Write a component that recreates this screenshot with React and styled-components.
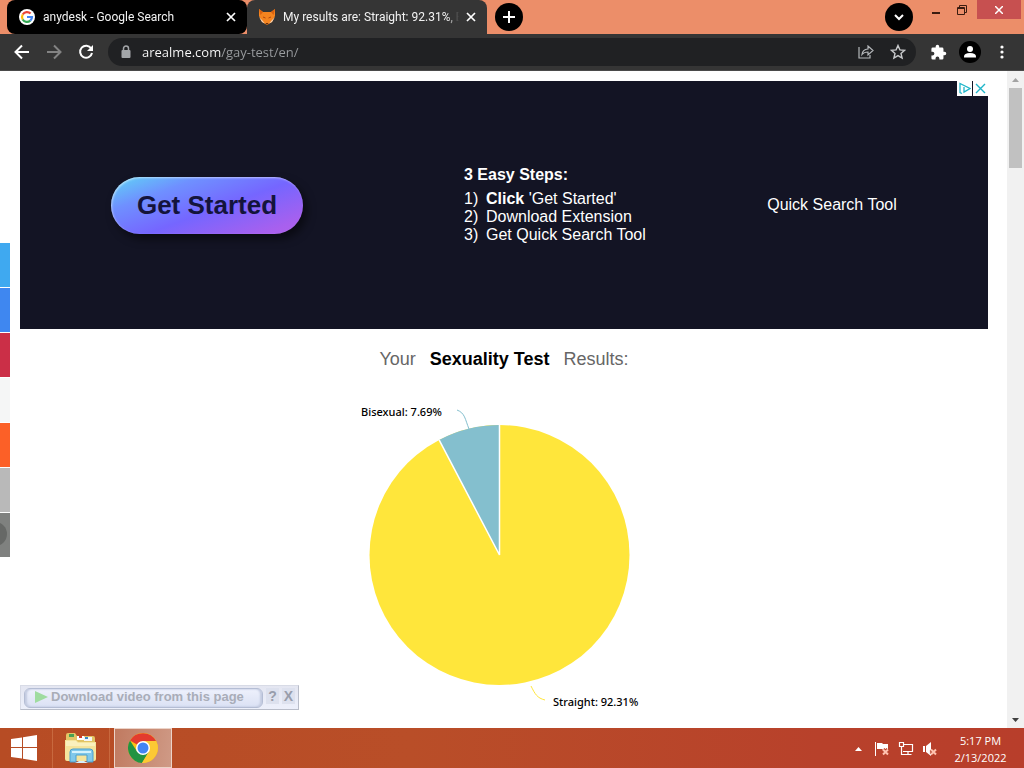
import React from "react";
import styled, { createGlobalStyle, css } from "styled-components";

const ui = `"Open Sans", "Noto Sans", sans-serif`;
const compact = `Roboto, "Open Sans", sans-serif`;
const sans = `"Liberation Sans", Arial, sans-serif`;

const GlobalStyle = createGlobalStyle`
  * { box-sizing: border-box; }
  body { margin: 0; background: #fff; font-family: ${sans}; }
  button { border: 0; padding: 0; margin: 0; background: none; font: inherit; color: inherit; cursor: pointer; }
  svg { display: block; flex: none; }
`;

const Desktop = styled.div`
  display: flex;
  flex-direction: column;
  height: 100vh;
  overflow: hidden;
`;

/* Window frame */
const TabStrip = styled.header`
  display: flex;
  align-items: flex-start;
  flex: none;
  height: 34px;
  padding-left: 7px;
  background: #ec8e69;
`;

const Tab = styled.div`
  display: flex;
  align-items: center;
  width: 240px;
  height: 34px;
  padding: 0 8px 0 12px;
  border-radius: ${(p) => (p.$active ? "8px 8px 0 0" : "8px")};
  background: ${(p) => (p.$active ? "#353535" : "#000")};
  color: #f2f2f2;
  font: 12px/16px ${compact};
`;

const TabTitle = styled.button`
  display: flex;
  align-items: center;
  gap: 8px;
  flex: 1;
  min-width: 0;
  text-align: left;
`;

const TabText = styled.span`
  flex: 1;
  overflow: hidden;
  white-space: nowrap;
  mask-image: linear-gradient(to left, transparent, #000 12px);
`;

const TabClose = styled.button`
  display: grid;
  place-items: center;
  width: 16px;
  height: 16px;
  margin-left: 4px;
`;

const RoundButton = styled.button`
  display: grid;
  place-items: center;
  width: 28px;
  height: 28px;
  margin: 3px 10px 0 8px;
  border-radius: 50%;
  background: #000;
`;

const WindowControls = styled.div`
  display: flex;
  margin-left: auto;
`;

const WindowButton = styled.button`
  display: grid;
  place-items: center;
  width: 26px;
  height: 19px;
`;

const CloseWindow = styled(WindowButton)`
  width: 44px;
  margin: 0 3px 0 2px;
  background: #c75050;
`;

const Toolbar = styled.nav`
  display: flex;
  align-items: center;
  flex: none;
  height: 37px;
  padding: 0 6px;
  background: #353535;
  border-bottom: 1px solid #4a4a4a;
`;

const ToolButton = styled.button`
  display: grid;
  place-items: center;
  width: 32px;
  height: 28px;
`;

const AddressBar = styled.div`
  display: flex;
  align-items: center;
  flex: 1;
  height: 28px;
  margin: 0 6px;
  padding: 0 2px 0 12px;
  border-radius: 14px;
  background: #202123;
`;

const AddressInput = styled.input`
  flex: 1;
  min-width: 0;
  height: 24px;
  margin-left: 10px;
  padding: 0;
  border: 0;
  outline: 0;
  font: 13px/24px ${ui};
  background: linear-gradient(to right, #fff 79px, #9a9da0 79px);
  background-clip: text;
  -webkit-background-clip: text;
  color: transparent;
`;

/* Page */
const Viewport = styled.div`
  position: relative;
  display: flex;
  flex: 1;
  min-height: 0;
  background: #fff;
`;

const Page = styled.main`
  flex: 1;
  min-width: 0;
  padding: 10px 19px 0 20px;
  overflow: hidden;
`;

const Ad = styled.section`
  position: relative;
  display: grid;
  grid-template-columns: 374fr 282fr 312fr;
  align-items: center;
  height: 248px;
  background: #131424;
  color: #fff;
  font-size: 16px;
  line-height: 18px;
`;

const AdChoices = styled.div`
  position: absolute;
  top: 0;
  right: 0;
  display: flex;
  gap: 1px;
`;

const AdBadge = styled.button`
  display: grid;
  place-items: center;
  width: 15px;
  height: 15px;
  background: #fff;
`;

const GetStarted = styled.button`
  justify-self: center;
  width: 192px;
  height: 57px;
  border-radius: 29px;
  background: linear-gradient(160deg, #5fd6f5 0%, #6f90ff 26%, #7566ff 55%, #a860ee 88%, #b062ea 100%);
  box-shadow: inset 1px 1px 2px rgba(255, 255, 255, 0.5), 4px 5px 8px rgba(0, 0, 0, 0.5);
  color: #14143c;
  font-size: 26px;
  font-weight: bold;
  line-height: 57px;
`;

const Steps = styled.div`
  padding-left: 70px;
`;

const StepsTitle = styled.strong`
  display: block;
  margin-bottom: 6px;
`;

const StepList = styled.ol`
  margin: 0;
  padding: 0;
  list-style: none;
`;

const Step = styled.li`
  display: flex;
  white-space: pre;
`;

const StepNumber = styled.span`
  width: 22px;
`;

const AdName = styled.div`
  text-align: center;
`;

const ResultHeading = styled.h1`
  display: flex;
  justify-content: center;
  gap: 14px;
  margin: 20px 0 0;
  font-size: 18px;
  font-weight: normal;
  line-height: 20px;
  color: #666;
`;

const TestName = styled.strong`
  color: #000;
`;

const Chart = styled.svg`
  margin: 26px auto 0;
  font: 500 11px "Noto Sans", sans-serif;
`;

const Share = styled.aside`
  position: absolute;
  left: 0;
  top: 172px;
  display: grid;
  gap: 1px;
`;

const ShareLink = styled.a`
  display: block;
  width: 10px;
  height: 44px;
  overflow: hidden;
  background: ${(p) => p.$color};
`;

const Downloader = styled.div`
  position: absolute;
  left: 20px;
  bottom: 18px;
  display: flex;
  align-items: center;
  gap: 3px;
  width: 279px;
  height: 25px;
  padding: 0 3px;
  background: linear-gradient(#e4e6f1, #edf0fb);
  border: 1px solid #d8dbe6;
  border-right-color: #b9bdc9;
  border-bottom-color: #b9bdc9;
  color: #a9adb8;
  font-size: 13px;
  font-weight: bold;
`;

const DownloadButton = styled.button`
  display: flex;
  align-items: center;
  gap: 2px;
  flex: 1;
  height: 20px;
  padding: 0 0 2px 9px;
  border: 1px solid #b4bdd4;
  border-radius: 6px;
  background: linear-gradient(#eef1fc, #dbe1f4);
  box-shadow: inset 2px 0 2px #c3cbe0, inset -2px 0 2px #c3cbe0;
  white-space: nowrap;
`;

const SmallButton = styled.button`
  width: 13px;
  height: 16px;
  margin-bottom: 4px;
  background: #dde1ee;
  color: #989dab;
  font-size: 14px;
  line-height: 16px;
`;

const Scrollbar = styled.div`
  display: flex;
  flex-direction: column;
  align-items: center;
  width: 17px;
  background: #f1f1f1;
`;

const ScrollArrow = styled.button`
  display: grid;
  place-items: center;
  width: 17px;
  height: 17px;
`;

const ScrollThumb = styled.div`
  width: 13px;
  height: 80px;
  margin-bottom: auto;
  background: #c1c1c1;
`;

/* Taskbar */
const Taskbar = styled.footer`
  display: flex;
  align-items: center;
  gap: 4px;
  flex: none;
  height: 40px;
  background: linear-gradient(to right, #b74c24, #b94e28 40%, #b8412b 80%, #b83e2b);
  color: #fff;
`;

const TaskButton = styled.button`
  display: grid;
  place-items: center;
  width: ${(p) => (p.$start ? "48px" : "58px")};
  height: 40px;
  ${(p) =>
    p.$divided &&
    css`
      border-left: 1px solid #c8693f;
      border-right: 1px solid #c8693f;
    `}
  ${(p) =>
    p.$current &&
    css`
      background: linear-gradient(100deg, #c07a60, #cf9a86);
      border: 1px solid #ecd3c8;
    `}
`;

const Tray = styled.div`
  display: flex;
  align-items: center;
  margin-left: auto;
  padding: 2px 5px 0 0;
`;

const TrayButton = styled.button`
  display: grid;
  place-items: center;
  width: 24px;
  height: 24px;
`;

const Clock = styled.time`
  width: 77px;
  text-align: center;
  font: 11px/17px ${ui};
`;

const CloseIcon = () => (
  <svg width="10" height="10" viewBox="0 0 10 10" stroke="#fff" strokeWidth="1.7">
    <path d="M1 1l8 8M9 1L1 9" />
  </svg>
);

const GoogleIcon = () => (
  <svg width="16" height="16" viewBox="0 0 16 16">
    <circle cx="8" cy="8" r="8" fill="#fff" />
    <g fill="none" strokeWidth="2.2">
      <path d="M11.6 4.6A5 5 0 0 0 3.7 5.5" stroke="#ea4335" />
      <path d="M3.7 5.5a5 5 0 0 0 0 5" stroke="#fbbc05" />
      <path d="M3.7 10.5a5 5 0 0 0 7.6 1.2" stroke="#34a853" />
      <path d="M11.3 11.7A5 5 0 0 0 13 8H8" stroke="#4285f4" />
    </g>
  </svg>
);

const FoxIcon = () => (
  <svg width="16" height="16" viewBox="0 0 16 16">
    <path d="M0 0l4 3h8l4-3v7l-3 6-5 3-5-3-3-6z" fill="#f5841f" />
    <path d="M0 0l4 3-2.500 3zM16 0l-4 3 2.500 3z" fill="#d9610f" />
    <path d="M0 8l3 3 3 3.500-3-1.500zM16 8l-3 3-3 3.500 3-1.500z" fill="#f6d5b8" />
    <path d="M4 8l2.500 1M12 8L9.500 9" stroke="#b3480c" />
    <path d="M6.500 14h3L8 15.800z" fill="#5a2a10" />
  </svg>
);

const ChromeIcon = () => (
  <svg width="30" height="30" viewBox="0 0 30 30">
    <circle cx="15" cy="15" r="15" fill="#fbc116" />
    <path d="M15 15L2 7.500A15 15 0 0 1 28 8H15z" fill="#e33b2e" />
    <path d="M2 7.500A15 15 0 0 0 14 30l7-11.500-12 0z" fill="#229342" />
    <path d="M28 8H15v7l6 3.500L14 30A15 15 0 0 0 28 8z" fill="#fcc934" />
    <circle cx="15" cy="15" r="7" fill="#fff" />
    <circle cx="15" cy="15" r="5.500" fill="#4285f4" />
  </svg>
);

const FolderIcon = () => (
  <svg width="34" height="32" viewBox="0 0 34 32">
    <path d="M2 3q0-2 2-2h7l2 3h16q2 0 2 2v22H2z" fill="#e2c465" />
    <path d="M5 2h5v3H5z" fill="#49a052" />
    <path d="M13 4h7l2 4h-9z" fill="#fff" />
    <path d="M15 4h3v2h-3z" fill="#cf3b2b" />
    <path d="M20 5h8v4h-8z" fill="#f5f5f5" />
    <path d="M21 5h3v2h-3z" fill="#3489c9" />
    <path d="M1 8h11l2 2h18v17q0 2-2 2H3q-2 0-2-2z" fill="#f5e49c" />
    <path d="M2 9h10l2 2h17v3H2z" fill="#faf0bd" />
    <path d="M6 30V20q0-3 3-3h17q3 0 3 3v10h-6v-7H12v7z" fill="#80c8ea" stroke="#4b9fce" />
    <path d="M8 20h19" stroke="#d5f2fc" strokeWidth="2" />
    <path d="M11 31l4-2h5l4 2z" fill="#d6eefb" />
  </svg>
);

const shares = [
  ["Twitter", "#3fa9f0"],
  ["Facebook", "#3f87f0"],
  ["Pinterest", "#cb2f47"],
  ["Email", "#f5f6f6"],
  ["Reddit", "#fc6027"],
  ["Link", "#b9b9b9"],
  ["More", "#7f817f"],
];

export default function App() {
  return (
    <>
      <GlobalStyle />
      <Desktop>
        <TabStrip>
          <Tab>
            <TabTitle>
              <GoogleIcon />
              <TabText>anydesk - Google Search</TabText>
            </TabTitle>
            <TabClose aria-label="Close tab"><CloseIcon /></TabClose>
          </Tab>
          <Tab $active>
            <TabTitle>
              <FoxIcon />
              <TabText>My results are: Straight: 92.31%, B</TabText>
            </TabTitle>
            <TabClose aria-label="Close tab"><CloseIcon /></TabClose>
          </Tab>
          <RoundButton aria-label="New tab">
            <svg width="12" height="12" viewBox="0 0 12 12" stroke="#fff" strokeWidth="2">
              <path d="M6 0v12M0 6h12" />
            </svg>
          </RoundButton>
          <WindowControls>
            <RoundButton aria-label="Search tabs">
              <svg width="10" height="7" viewBox="0 0 10 7" fill="none" stroke="#fff" strokeWidth="2">
                <path d="M1 1l4 4 4-4" />
              </svg>
            </RoundButton>
            <WindowButton aria-label="Minimize">
              <svg width="8" height="12" viewBox="0 0 8 12"><path d="M0 8h8v2H0z" fill="#3a1c10" /></svg>
            </WindowButton>
            <WindowButton aria-label="Restore">
              <svg width="10" height="10" viewBox="0 0 10 10" fill="none" stroke="#3a1c10">
                <path d="M.5 2.500h7v7h-7zM.5 3.500h7M2.500 2V.5h7v7H8" />
              </svg>
            </WindowButton>
            <CloseWindow aria-label="Close">
              <svg width="8" height="8" viewBox="0 0 8 8" stroke="#fff" strokeWidth="1.500">
                <path d="M0 0l8 8M8 0L0 8" />
              </svg>
            </CloseWindow>
          </WindowControls>
        </TabStrip>

        <Toolbar>
          <ToolButton aria-label="Back">
            <svg width="16" height="16" viewBox="0 0 16 16" fill="none" stroke="#fff" strokeWidth="2">
              <path d="M15 8H2M8 1.500L1.500 8 8 14.500" />
            </svg>
          </ToolButton>
          <ToolButton aria-label="Forward">
            <svg width="16" height="16" viewBox="0 0 16 16" fill="none" stroke="#838383" strokeWidth="2">
              <path d="M1 8h13M8 1.500l6.500 6.500L8 14.500" />
            </svg>
          </ToolButton>
          <ToolButton aria-label="Reload">
            <svg width="16" height="16" viewBox="0 0 16 16" fill="none" stroke="#fff" strokeWidth="2">
              <path d="M13.200 4.500A6 6 0 1 0 14 9" />
              <path d="M15 1v6H9z" fill="#fff" stroke="none" />
            </svg>
          </ToolButton>
          <AddressBar>
            <svg width="12" height="14" viewBox="0 0 12 14">
              <path d="M3.500 6V3.500a2.500 2.500 0 0 1 5 0V6" fill="none" stroke="#a3a6a9" strokeWidth="1.500" />
              <rect x="1.500" y="5" width="9" height="8" rx="1" fill="#a3a6a9" />
            </svg>
            <AddressInput aria-label="Address" defaultValue="arealme.com/gay-test/en/" />
            <ToolButton aria-label="Share">
              <svg width="16" height="14" viewBox="0 0 16 14" fill="none" stroke="#b4b7ba" strokeWidth="1.200">
                <path d="M1 2v11h11v-3" />
                <path d="M4 9.500q.5-5 6-5.500V1l5 4.500-5 4.500V7q-4 0-6 2.500z" />
              </svg>
            </ToolButton>
            <ToolButton aria-label="Bookmark this page">
              <svg width="16" height="16" viewBox="0 0 16 16" fill="none" stroke="#c8cacc" strokeWidth="1.400">
                <path d="M8 1.500l1.900 4.400 4.700.4-3.600 3.100 1.100 4.600L8 11.600 3.900 14 5 9.400 1.400 6.300l4.700-.4z" />
              </svg>
            </ToolButton>
          </AddressBar>
          <ToolButton aria-label="Extensions">
            <svg width="17" height="17" viewBox="0 0 24 24" fill="#fff">
              <path d="M20.500 11H19V7a2 2 0 0 0-2-2h-4V3.500a2.500 2.500 0 0 0-5 0V5H4a2 2 0 0 0-2 2v3.800h1.500a2.700 2.700 0 0 1 0 5.400H2V20a2 2 0 0 0 2 2h3.800v-1.500a2.700 2.700 0 0 1 5.400 0V22H17a2 2 0 0 0 2-2v-4h1.500a2.500 2.500 0 0 0 0-5z" />
            </svg>
          </ToolButton>
          <ToolButton aria-label="Profile">
            <svg width="22" height="22" viewBox="0 0 22 22">
              <circle cx="11" cy="11" r="11" fill="#000" />
              <circle cx="11" cy="8" r="3" fill="#fff" />
              <path d="M5 16.500v-1q0-3.500 6-3.500t6 3.500v1z" fill="#fff" />
            </svg>
          </ToolButton>
          <ToolButton aria-label="Menu">
            <svg width="4" height="14" viewBox="0 0 4 14" fill="#fff">
              <circle cx="2" cy="2" r="1.600" />
              <circle cx="2" cy="7" r="1.600" />
              <circle cx="2" cy="12" r="1.600" />
            </svg>
          </ToolButton>
        </Toolbar>

        <Viewport>
          <Page>
            <Ad>
              <GetStarted>Get Started</GetStarted>
              <Steps>
                <StepsTitle>3 Easy Steps:</StepsTitle>
                <StepList>
                  <Step><StepNumber>1)</StepNumber><b>Click</b> 'Get Started'</Step>
                  <Step><StepNumber>2)</StepNumber>Download Extension</Step>
                  <Step><StepNumber>3)</StepNumber>Get Quick Search Tool</Step>
                </StepList>
              </Steps>
              <AdName>Quick Search Tool</AdName>
              <AdChoices>
                <AdBadge aria-label="Ad choices">
                  <svg width="13" height="13" viewBox="0 0 13 13" fill="none" stroke="#1fb5c9" strokeWidth="1.300">
                    <path d="M4 11.500l-2-1V1.500l10 5L6 10V5" />
                  </svg>
                </AdBadge>
                <AdBadge aria-label="Close ad">
                  <svg width="11" height="11" viewBox="0 0 11 11" stroke="#1fb5c9" strokeWidth="1.400">
                    <path d="M1 1l9 9M10 1l-9 9" />
                  </svg>
                </AdBadge>
              </AdChoices>
            </Ad>

            <ResultHeading>
              <span>Your</span>
              <TestName>Sexuality Test</TestName>
              <span>Results:</span>
            </ResultHeading>

            <Chart width="290" height="320" viewBox="0 0 290 320" role="img" aria-label="Test results">
              <circle cx="140.500" cy="160" r="130" fill="#ffe63b" />
              <path d="M140.500 160L80.100 44.900A130 130 0 0 1 140.500 30z" fill="#84bfce" />
              <path d="M80.100 44.900L140.500 160V30" fill="none" stroke="#fff" strokeWidth="1.500" />
              <path d="M98 15C106 18 106 24 110 34" fill="none" stroke="#84bfce" />
              <path d="M172 291C176 299 178 303 186 305" fill="none" stroke="#ffe63b" />
              <text x="2" y="21">Bisexual: 7.69%</text>
              <text x="194" y="311">Straight: 92.31%</text>
            </Chart>
          </Page>

          <Share>
            {shares.map(([name, color]) => (
              <ShareLink key={name} href="#" aria-label={name} $color={color}>
                {name === "More" && (
                  <svg width="10" height="44" viewBox="0 0 10 44">
                    <circle cx="-5" cy="21" r="12" fill="#666866" />
                  </svg>
                )}
              </ShareLink>
            ))}
          </Share>

          <Downloader>
            <DownloadButton>
              <svg width="15" height="14" viewBox="0 0 15 14">
                <path d="M1 1l13 6-13 6z" fill="#9fdca0" />
              </svg>
              Download video from this page
            </DownloadButton>
            <SmallButton>?</SmallButton>
            <SmallButton>X</SmallButton>
          </Downloader>

          <Scrollbar>
            <ScrollArrow aria-label="Scroll up">
              <svg width="7" height="4" viewBox="0 0 7 4"><path d="M0 4l3.500-4L7 4z" fill="#a3a3a3" /></svg>
            </ScrollArrow>
            <ScrollThumb />
            <ScrollArrow aria-label="Scroll down">
              <svg width="7" height="4" viewBox="0 0 7 4"><path d="M0 0l3.500 4L7 0z" fill="#404040" /></svg>
            </ScrollArrow>
          </Scrollbar>
        </Viewport>

        <Taskbar>
          <TaskButton $start aria-label="Start">
            <svg width="26" height="26" viewBox="0 0 26 26" fill="#fff">
              <path d="M0 4l11-1.600V12H0zM12 2.200L26 0v12H12zM0 13h11v10.400L0 22zM12 13h14v13l-14-2.300z" />
            </svg>
          </TaskButton>
          <TaskButton $divided aria-label="File Explorer"><FolderIcon /></TaskButton>
          <TaskButton $current aria-label="Google Chrome"><ChromeIcon /></TaskButton>
          <Tray>
            <TrayButton aria-label="Show hidden icons">
              <svg width="7" height="4" viewBox="0 0 7 4"><path d="M0 4l3.500-4L7 4z" fill="#fff" /></svg>
            </TrayButton>
            <TrayButton aria-label="Action Center">
              <svg width="16" height="16" viewBox="0 0 16 16">
                <path d="M1 1h1v14H1zM3 2h5l1 1h5v5l-5 1-1-1H3z" fill="#fff" />
                <path d="M9 8.500l5 5M14 8.500l-5 5" stroke="#b8412b" strokeWidth="4" />
                <path d="M9 8.500l5 5M14 8.500l-5 5" stroke="#ffc3b0" strokeWidth="2" />
              </svg>
            </TrayButton>
            <TrayButton aria-label="Network">
              <svg width="16" height="16" viewBox="0 0 16 16" fill="none" stroke="#fff" strokeWidth="1.200">
                <path d="M6 3.500h8.500v7H5M10 10.500V13M6.500 13.500h7M1.500 1.500h4v4h-4zM3.500 6v7.500H7" />
              </svg>
            </TrayButton>
            <TrayButton aria-label="Volume">
              <svg width="16" height="16" viewBox="0 0 16 16">
                <path d="M1 5h2v6H1zM4 5l5-4v14l-5-4z" fill="#fff" />
                <path d="M9 8.500l5 5M14 8.500l-5 5" stroke="#b8412b" strokeWidth="4" />
                <path d="M9 8.500l5 5M14 8.500l-5 5" stroke="#ffc3b0" strokeWidth="2" />
              </svg>
            </TrayButton>
            <Clock>
              5:17 PM
              <br />
              2/13/2022
            </Clock>
          </Tray>
        </Taskbar>
      </Desktop>
    </>
  );
}
